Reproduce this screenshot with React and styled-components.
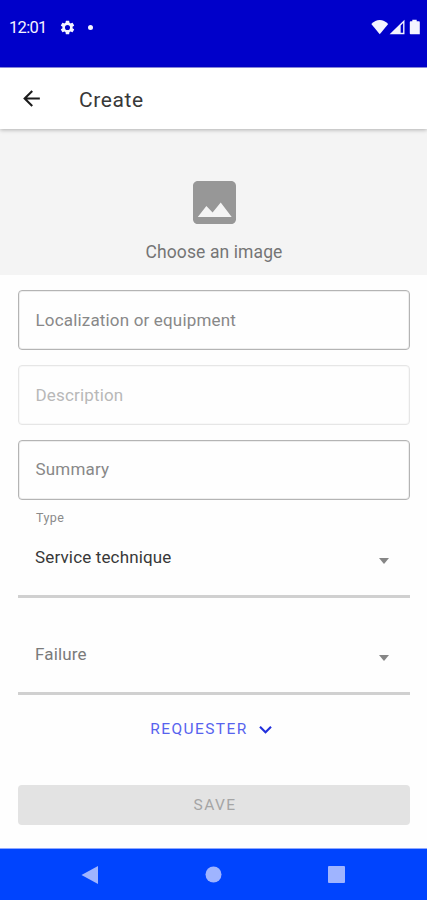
import React from "react";
import styled, { createGlobalStyle } from "styled-components";

const GlobalStyle = createGlobalStyle`
  * { box-sizing: border-box; }
  body { margin: 0; background: #fefefe; font-family: Roboto, "Liberation Sans", sans-serif; }
`;

const Screen = styled.div`
  width: 427px;
  height: 900px;
  display: flex;
  flex-direction: column;
  overflow: hidden;
  background: #fefefe;
`;

const StatusBar = styled.header`
  height: 68px;
  flex: none;
  display: flex;
  align-items: flex-start;
  padding: 19px 6px 0 9px;
  background: #0000ca;
  border-bottom: 1px solid #8f8fe8;
  color: #f4f4ff;
`;

const Clock = styled.span`
  width: 49.5px;
  font-size: 16.5px;
  line-height: 18px;
  letter-spacing: -0.7px;
`;

const Dot = styled.span`
  width: 5px;
  height: 5px;
  margin: 6px 0 0 12.5px;
  border-radius: 50%;
  background: #f4f4ff;
`;

const StatusIcons = styled.div`
  display: flex;
  margin-left: auto;
`;

const Icon = styled.svg`
  display: block;
  flex: none;
  fill: currentColor;
`;

const AppBar = styled.div`
  height: 61px;
  flex: none;
  display: flex;
  align-items: center;
  padding: 0 18.5px;
  background: #fff;
  box-shadow: 0 1px 4px rgba(0, 0, 0, 0.28);
  z-index: 1;
  color: #1c1c1c;
`;

const Title = styled.h1`
  margin: 3px 0 0 35.5px;
  font-size: 21px;
  font-weight: 400;
  line-height: 24px;
  letter-spacing: 0.6px;
  color: #383838;
`;

const ImagePicker = styled.div`
  height: 146px;
  flex: none;
  display: flex;
  flex-direction: column;
  align-items: center;
  padding: 52px 0 0 1px;
  background: #f4f4f4;
  color: #979797;
`;

const PickerLabel = styled.span`
  margin-top: 17px;
  font-size: 17.5px;
  line-height: 22px;
  letter-spacing: 0.1px;
  color: #757575;
`;

const Form = styled.form`
  flex: 1;
  display: flex;
  flex-direction: column;
  padding: 15px 17px 0 18px;
`;

const FieldStack = styled.div`
  flex: none;
  display: flex;
  flex-direction: column;
  gap: 15px;
  padding-bottom: 1px;
`;

const Field = styled.div`
  height: 60px;
  padding: 18px 16.5px;
  border: ${(p) => (p.$disabled ? "1px solid #e6e6e6" : "1px solid #b4b4b4")};
  box-shadow: inset 0 0 0 1px ${(p) => (p.$disabled ? "#f8f8f8" : "#eeeeee")};
  border-radius: 4px;
  font-size: 17px;
  line-height: 22px;
  letter-spacing: 0.17px;
  color: ${(p) => (p.$disabled ? "#b8b8b8" : "#888888")};

  &:last-child { padding-top: 17px; }
`;

const SelectField = styled.div`
  height: 97px;
  flex: none;
  display: flex;
  flex-direction: column;
  padding: 0 21px 0 17px;
  border-bottom: 3px solid #d0d0d0;
`;

const SelectLabel = styled.span`
  height: 36px;
  padding: 9px 0 0 1px;
  font-size: 12.5px;
  line-height: 16px;
  letter-spacing: 0.4px;
  color: #8a8a8a;
`;

const SelectRow = styled.div`
  height: 40px;
  display: flex;
  align-items: center;
  justify-content: space-between;
  color: #868686;

  svg { margin-top: 8px; }
`;

const SelectValue = styled.span`
  font-size: 17px;
  line-height: 22px;
  letter-spacing: 0.15px;
  color: ${(p) => (p.$placeholder ? "#7a7a7a" : "#383838")};
`;

const Requester = styled.button`
  height: 36px;
  flex: none;
  align-self: center;
  display: flex;
  align-items: center;
  gap: 5px;
  margin-top: 16px;
  padding: 0;
  border: 0;
  background: none;
  color: #2230dc;
`;

const ButtonText = styled.span`
  font-family: Roboto, "Liberation Sans", sans-serif;
  font-size: 15.5px;
  line-height: 20px;
  letter-spacing: 1.4px;
  color: ${(p) => (p.$disabled ? "#a5a5a5" : "#5763ee")};
`;

const SaveButton = styled.button`
  height: 40px;
  flex: none;
  display: flex;
  align-items: center;
  justify-content: center;
  margin-top: 38px;
  padding: 0 0 0 2px;
  border: 0;
  border-radius: 4px;
  background: #e3e3e3;
`;

const NavBar = styled.nav`
  height: 52px;
  flex: none;
  display: flex;
  justify-content: space-between;
  padding: 17px 82px 0 81px;
  border-top: 1px solid #8fa8ff;
  background: #0044fe;
  color: #9fb4ff;
`;

function Glyph({ d, width, height = width, box = "0 0 24 24" }) {
  return (
    <Icon width={width} height={height} viewBox={box} preserveAspectRatio="none" aria-hidden="true">
      <path d={d} fillRule="evenodd" />
    </Icon>
  );
}

const GEAR =
  "M19.14 12.94c.04-.3.06-.61.06-.94 0-.32-.02-.64-.07-.94l2.03-1.58a.49.49 0 0 0 .12-.61l-1.92-3.32a.49.49 0 0 0-.59-.22l-2.39.96a7 7 0 0 0-1.62-.94l-.36-2.54a.48.48 0 0 0-.48-.41h-3.84a.48.48 0 0 0-.47.41l-.36 2.54c-.59.24-1.13.57-1.62.94l-2.39-.96a.48.48 0 0 0-.59.22L2.74 8.87a.48.48 0 0 0 .12.61l2.03 1.58c-.05.3-.09.63-.09.94s.02.64.07.94l-2.03 1.58a.49.49 0 0 0-.12.61l1.92 3.32c.12.22.37.29.59.22l2.39-.96c.5.38 1.03.7 1.62.94l.36 2.54c.05.24.24.41.48.41h3.84c.24 0 .44-.17.47-.41l.36-2.54c.59-.24 1.13-.56 1.62-.94l2.39.96c.22.08.47 0 .59-.22l1.92-3.32a.48.48 0 0 0-.12-.61l-2.01-1.58zM12 15.6a3.6 3.6 0 1 1 0-7.2 3.6 3.6 0 0 1 0 7.2z";
const ARROW_BACK = "M20 11H7.83l5.59-5.59L12 4l-8 8 8 8 1.41-1.41L7.83 13H20v-2z";
const IMAGE =
  "M21 19V5c0-1.1-.9-2-2-2H5c-1.1 0-2 .9-2 2v14c0 1.1.9 2 2 2h14c1.1 0 2-.9 2-2zM5 18.1l3.6-4.6 2.6 2.7 3.4-4.2 4.6 6.1z";
const CHEVRON = "M16.59 8.59 12 13.17 7.41 8.59 6 10l6 6 6-6z";
const WIFI = "M0.3 5C3 2.2 5.5 1 8.5 1S14 2.2 16.7 5L8.5 15.2z";
const SIGNAL = "M15 0.8V15.2H0.6zM11.3 6.5V13.7H13.7V4.1z";
const BATTERY =
  "M5 2.2H7.3V0.8H11.7V2.2H14Q14.8 2.2 14.8 3.2V15.2H5.6Q4.8 15.2 4.8 14.2V3.2Q4.8 2.2 5.6 2.2z";
const DROP_ARROW = "M0 0H10L5 6z";

export default function App() {
  return (
    <>
      <GlobalStyle />
      <Screen>
        <StatusBar>
          <Clock>12:01</Clock>
          <Glyph d={GEAR} width={17} />
          <Dot />
          <StatusIcons>
            <Glyph d={WIFI} box="0 0 17 16" width={17.5} height={16} />
            <Glyph d={SIGNAL} box="0 0 16 16" width={16.5} height={16} />
            <Glyph d={BATTERY} box="0 0 16 16" width={16} />
          </StatusIcons>
        </StatusBar>
        <AppBar>
          <Glyph d={ARROW_BACK} width={25} />
          <Title>Create</Title>
        </AppBar>
        <ImagePicker>
          <Glyph d={IMAGE} box="3 3 18 18" width={43} />
          <PickerLabel>Choose an image</PickerLabel>
        </ImagePicker>
        <Form>
          <FieldStack>
            <Field>Localization or equipment</Field>
            <Field $disabled>Description</Field>
            <Field>Summary</Field>
          </FieldStack>
          <SelectField>
            <SelectLabel>Type</SelectLabel>
            <SelectRow>
              <SelectValue>Service technique</SelectValue>
              <Glyph d={DROP_ARROW} box="0 0 10 6" width={10} height={6} />
            </SelectRow>
          </SelectField>
          <SelectField>
            <SelectLabel />
            <SelectRow>
              <SelectValue $placeholder>Failure</SelectValue>
              <Glyph d={DROP_ARROW} box="0 0 10 6" width={10} height={6} />
            </SelectRow>
          </SelectField>
          <Requester type="button">
            <ButtonText>REQUESTER</ButtonText>
            <Glyph d={CHEVRON} width={25} />
          </Requester>
          <SaveButton type="button">
            <ButtonText $disabled>SAVE</ButtonText>
          </SaveButton>
        </Form>
        <NavBar>
          <Glyph d="M0.5 9L17 0V18z" box="0 0 18 18" width={18} />
          <Glyph d="M8.5 0.5a8 8 0 1 0 0 16a8 8 0 1 0 0-16z" box="0 0 17 17" width={17} />
          <Glyph d="M1 0H16Q17 0 17 1V16Q17 17 16 17H1Q0 17 0 16V1Q0 0 1 0z" box="0 0 17 17" width={17} />
        </NavBar>
      </Screen>
    </>
  );
}
